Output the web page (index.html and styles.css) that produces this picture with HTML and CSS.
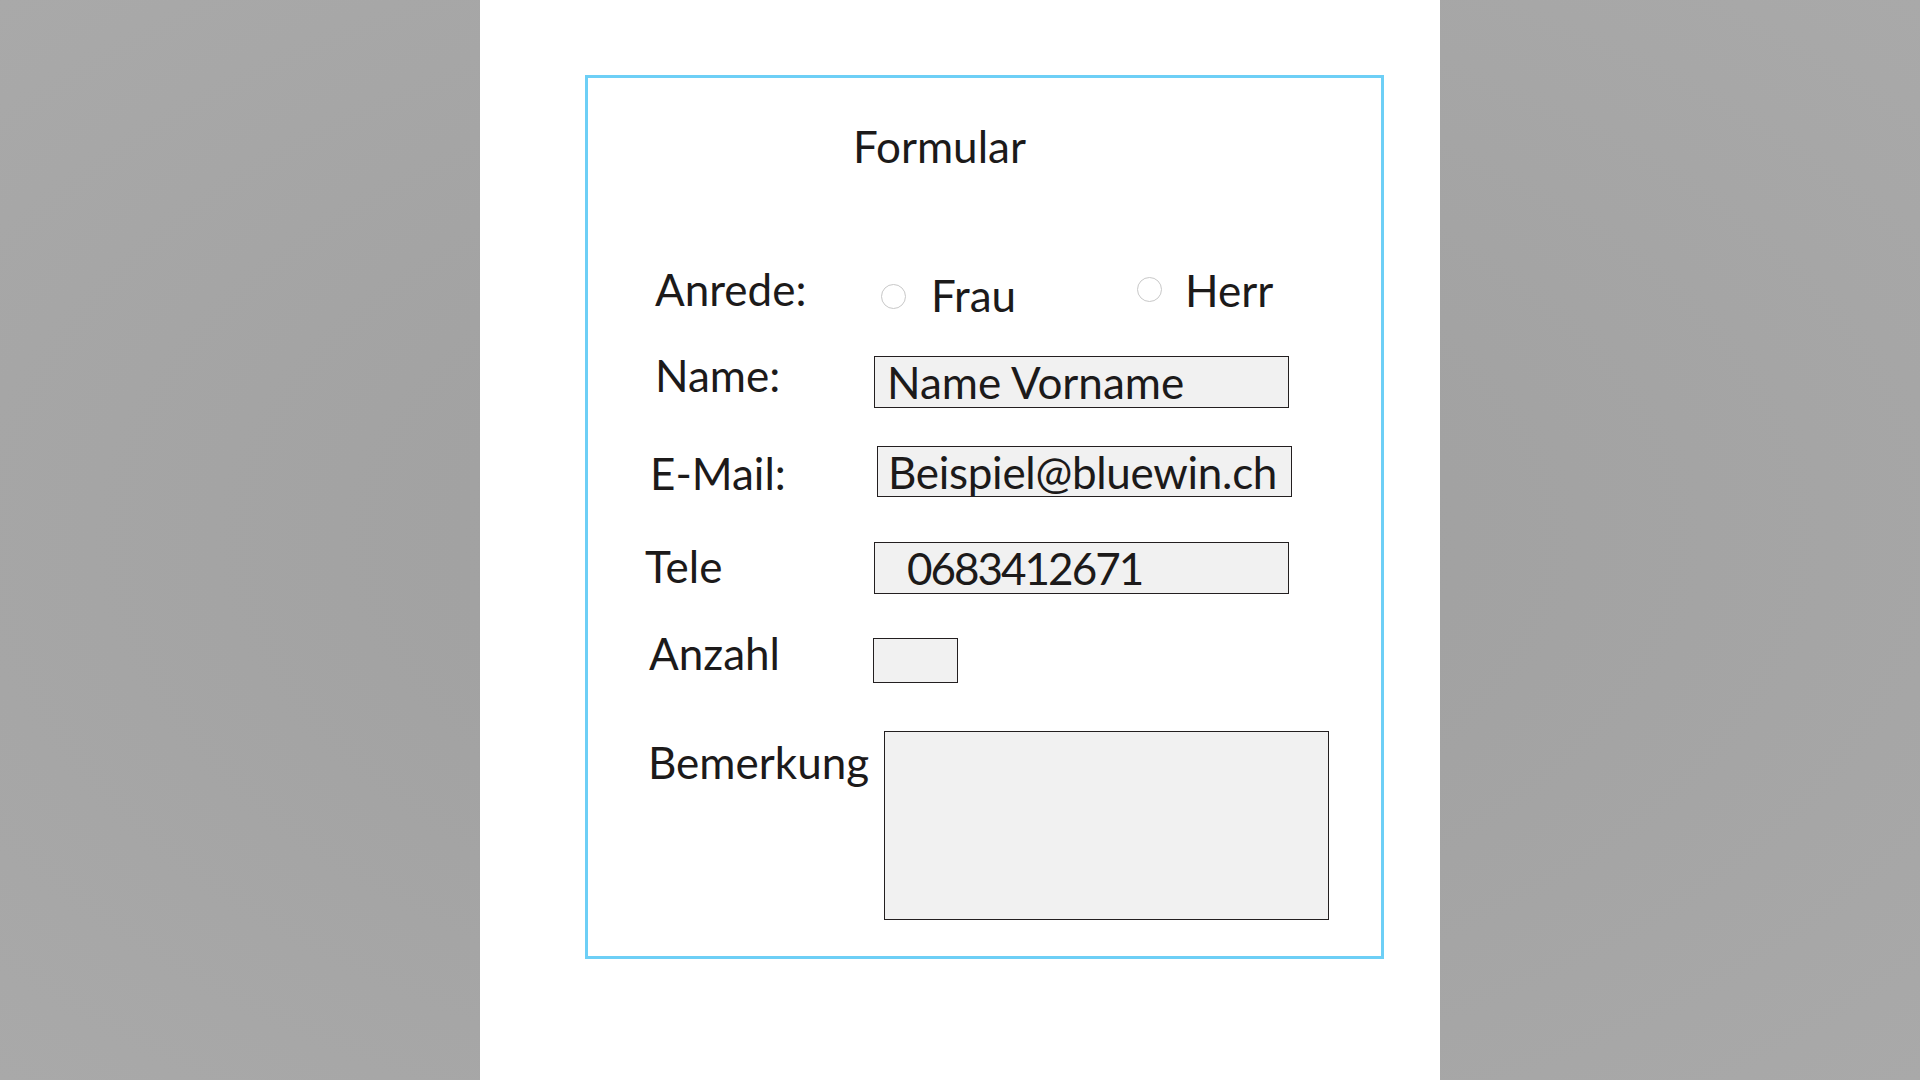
FILE: index.html
```html
<!DOCTYPE html>
<html lang="de">

<head>
    <meta charset="UTF-8">
    <meta name="viewport" content="width=device-width, initial-scale=1.0">
    <title>Formular</title>
    <link rel="stylesheet" href="styles.css">
</head>

<body>
    <div class="sheet">
        <form class="form-box">
            <h1 class="title">Formular</h1>

            <div class="row row-anrede">
                <span class="label">Anrede:</span>
                <label class="option option-frau">
                    <input type="radio" name="anrede" value="frau">
                    <span>Frau</span>
                </label>
                <label class="option option-herr">
                    <input type="radio" name="anrede" value="herr">
                    <span>Herr</span>
                </label>
            </div>

            <div class="row row-name">
                <label class="label" for="name">Name:</label>
                <input class="field" id="name" type="text" value="Name Vorname">
            </div>

            <div class="row row-mail">
                <label class="label" for="mail">E-Mail:</label>
                <input class="field" id="mail" type="text" value="Beispiel@bluewin.ch">
            </div>

            <div class="row row-tele">
                <label class="label" for="tele">Tele</label>
                <input class="field" id="tele" type="text" value="0683412671">
            </div>

            <div class="row row-anzahl">
                <label class="label" for="anzahl">Anzahl</label>
                <input class="field field-small" id="anzahl" type="text">
            </div>

            <div class="row row-bemerkung">
                <label class="label" for="bemerkung">Bemerkung</label>
                <textarea class="field field-area" id="bemerkung"></textarea>
            </div>
        </form>
    </div>
</body>

</html>
```

FILE: styles.css
```css
* {
    box-sizing: border-box;
}

body {
    margin: 0;
    height: 1080px;
    overflow: hidden;
    display: flex;
    justify-content: center;
    background: radial-gradient(ellipse at center, #9e9e9e 0%, #a4a4a4 55%, #a9a9a9 100%);
    font-family: Lato, "Open Sans", sans-serif;
    color: #1c1a1a;
}

.sheet {
    width: 960px;
    height: 1080px;
    background: #fff;
    padding: 75px 0 0 105px;
}

.form-box {
    width: 799px;
    height: 884px;
    border: 3px solid #6dcff6;
}

.title {
    margin: 41px 0 0 265px;
    font-size: 44px;
    font-weight: normal;
    line-height: 54px;
}

.row {
    display: flex;
    align-items: flex-start;
    font-size: 44px;
    line-height: 54px;
}

.label {
    display: block;
    flex-shrink: 0;
}

.field {
    margin: 0;
    width: 415px;
    height: 52px;
    padding: 0 0 0 12px;
    border: 1px solid #231f20;
    border-radius: 0;
    background: #f1f1f1;
    font: inherit;
    color: #1c1a1a;
    outline: none;
}

/* Anrede */
.row-anrede {
    margin-top: 89px;
}

.row-anrede .label {
    margin-left: 67px;
    width: 226px;
}

.option {
    display: flex;
    align-items: flex-start;
}

.option input {
    appearance: none;
    -webkit-appearance: none;
    margin: 0;
    width: 25px;
    height: 25px;
    border: 1px solid #c8c8c8;
    border-radius: 50%;
    background: #fff;
}

.option-frau {
    width: 256px;
}

.option-frau input {
    margin-top: 22px;
}

.option-frau span {
    margin: 6px 0 0 25px;
}

.option-herr input {
    margin-top: 15px;
}

.option-herr span {
    margin: 1px 0 0 23px;
}

/* Name */
.row-name {
    margin-top: 26px;
}

.row-name .label {
    margin-left: 67px;
    width: 219px;
}

.row-name .field {
    margin-top: 8px;
}

/* E-Mail */
.row-mail {
    margin-top: 38px;
}

.row-mail .label {
    margin-left: 62px;
    width: 227px;
}

.row-mail .field {
    height: 51px;
    padding-left: 10px;
    letter-spacing: -0.3px;
}

/* Tele */
.row-tele {
    margin-top: 39px;
}

.row-tele .label {
    margin-left: 57px;
    width: 229px;
}

.row-tele .field {
    margin-top: 3px;
    padding-left: 32px;
    letter-spacing: -2px;
}

/* Anzahl */
.row-anzahl {
    margin-top: 32px;
}

.row-anzahl .label {
    margin-left: 61px;
    width: 224px;
}

.field-small {
    margin-top: 12px;
    width: 85px;
    height: 45px;
}

/* Bemerkung */
.row-bemerkung {
    margin-top: 48px;
}

.row-bemerkung .label {
    margin: 4px 0 0 60px;
    width: 236px;
}

.field-area {
    width: 445px;
    height: 189px;
    resize: none;
}
```
